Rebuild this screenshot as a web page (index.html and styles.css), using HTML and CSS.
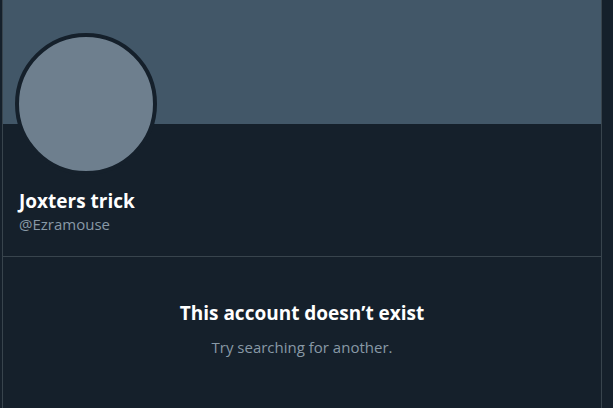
FILE: index.html
```html
<!DOCTYPE html>
<html>
<head>
<meta charset="utf-8">
<link rel="stylesheet" href="styles.css">
</head>
<body>
<div class="column">
  <div class="banner"></div>
  <div class="profile">
    <div class="avatar"></div>
    <div class="name">Joxters trick</div>
    <div class="handle">@Ezramouse</div>
  </div>
  <div class="empty">
    <div class="title">This account doesn’t exist</div>
    <div class="sub">Try searching for another.</div>
  </div>
</div>
</body>
</html>
```

FILE: styles.css
```css
html, body {
  margin: 0;
  padding: 0;
  background: #15202b;
  height: 100%;
  overflow: hidden;
}
body {
  font-family: "Open Sans", "Noto Sans", sans-serif;
}
.column {
  margin-left: 2px;
  width: 598px;
  border-left: 1px solid #38444d;
  border-right: 1px solid #38444d;
  min-height: 100%;
}
.banner {
  height: 124px;
  background: #425768;
}
.profile {
  display: flex;
  flex-direction: column;
  align-items: flex-start;
  padding: 0 16px;
  height: 132px;
  border-bottom: 1px solid #38444d;
}
.avatar {
  width: 134px;
  height: 134px;
  flex: none;
  border-radius: 50%;
  background: #6e7f8e;
  border: 4px solid #15202b;
  margin-top: -91px;
  margin-left: -4px;
}
.name {
  margin-top: 14px;
  color: #ffffff;
  font-weight: 700;
  font-size: 19px;
  line-height: 24px;
}
.handle {
  margin-top: 1px;
  color: #8899a6;
  font-size: 15px;
  line-height: 20px;
}
.empty {
  display: flex;
  flex-direction: column;
  align-items: center;
  padding-top: 42px;
}
.title {
  color: #ffffff;
  font-weight: 700;
  font-size: 19px;
  line-height: 28px;
}
.sub {
  margin-top: 10px;
  color: #8899a6;
  font-size: 15px;
  line-height: 20px;
}
```
